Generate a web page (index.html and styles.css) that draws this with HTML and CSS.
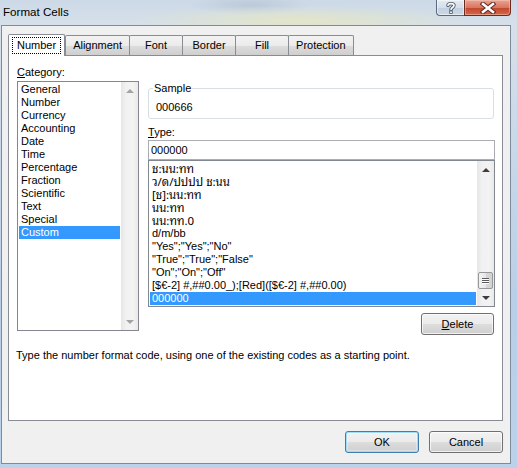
FILE: index.html
```html
<!DOCTYPE html>
<html lang="en">
<head>
    <meta charset="UTF-8">
    <meta name="viewport" content="width=device-width, initial-scale=1.0">
    <title>Format Cells</title>
    <link rel="stylesheet" href="styles.css">
</head>
<body>
    <div class="window">
        <div class="titlebar">
            <span class="title">Format Cells</span>
            <div class="caption-buttons">
                <span class="cap-btn help-btn">
                    <svg width="12" height="13" viewBox="0 0 12 13">
                        <path d="M3 4.5 C3 2 9 2 9 4.5 C9 6.5 6 6.5 6 8.5" fill="none" stroke="#4a5868" stroke-width="3.4" stroke-linecap="round"/>
                        <path d="M3 4.5 C3 2 9 2 9 4.5 C9 6.5 6 6.5 6 8.5" fill="none" stroke="#fff" stroke-width="1.6" stroke-linecap="round"/>
                        <rect x="4.3" y="9.6" width="3.4" height="3.2" fill="#4a5868"/>
                        <rect x="5.1" y="10.4" width="1.8" height="1.6" fill="#fff"/>
                    </svg>
                </span>
                <span class="cap-btn close-btn">
                    <svg width="16" height="12" viewBox="0 0 16 12">
                        <path d="M3 2 L13 10 M13 2 L3 10" stroke="#5b2a22" stroke-width="4.6" stroke-linecap="square"/>
                        <path d="M3 2 L13 10 M13 2 L3 10" stroke="#fff" stroke-width="2.6" stroke-linecap="square"/>
                    </svg>
                </span>
            </div>
        </div>

        <div class="client">
            <div class="tabs">
                <div class="tab active"><span class="focus">Number</span></div>
                <div class="tab">Alignment</div>
                <div class="tab">Font</div>
                <div class="tab">Border</div>
                <div class="tab">Fill</div>
                <div class="tab">Protection</div>
            </div>

            <div class="panel">
                <div class="panel-grid">
                    <div class="col-left">
                        <div class="label"><u>C</u>ategory:</div>
                        <div class="listbox category-list">
                            <ul class="items">
                                <li>General</li>
                                <li>Number</li>
                                <li>Currency</li>
                                <li>Accounting</li>
                                <li>Date</li>
                                <li>Time</li>
                                <li>Percentage</li>
                                <li>Fraction</li>
                                <li>Scientific</li>
                                <li>Text</li>
                                <li>Special</li>
                                <li class="selected">Custom</li>
                            </ul>
                            <div class="scrollbar disabled">
                                <div class="sb-btn"><span class="arrow up"></span></div>
                                <div class="sb-track"></div>
                                <div class="sb-btn"><span class="arrow down"></span></div>
                            </div>
                        </div>
                    </div>

                    <div class="col-right">
                        <div class="groupbox">
                            <span class="legend">Sample</span>
                            <div class="sample-value">000666</div>
                        </div>
                        <div class="label type-label"><u>T</u>ype:</div>
                        <div class="textbox">000000</div>
                        <div class="listbox type-list">
                            <ul class="items">
                                <li class="thai">ช:นน:ทท</li>
                                <li class="thai">ว/ด/ปปปป ช:นน</li>
                                <li class="thai">[ช]:นน:ทท</li>
                                <li class="thai">นน:ทท</li>
                                <li class="thai">นน:ทท.0</li>
                                <li>d/m/bb</li>
                                <li>"Yes";"Yes";"No"</li>
                                <li>"True";"True";"False"</li>
                                <li>"On";"On";"Off"</li>
                                <li>[$€-2] #,##0.00_);[Red]([$€-2] #,##0.00)</li>
                                <li class="selected">000000</li>
                            </ul>
                            <div class="scrollbar">
                                <div class="sb-btn"><span class="arrow up"></span></div>
                                <div class="sb-track">
                                    <div class="sb-thumb"><span></span><span></span><span></span></div>
                                </div>
                                <div class="sb-btn"><span class="arrow down"></span></div>
                            </div>
                        </div>
                        <div class="delete-row">
                            <button class="btn"><u>D</u>elete</button>
                        </div>
                    </div>
                </div>
                <p class="hint">Type the number format code, using one of the existing codes as a starting point.</p>
            </div>

            <div class="footer">
                <button class="btn default">OK</button>
                <button class="btn">Cancel</button>
            </div>
        </div>
    </div>
</body>
</html>
```

FILE: styles.css
```css
body {
    margin: 0;
    width: 517px;
    height: 468px;
    overflow: hidden;
    font-family: "Liberation Sans", Arial, "DejaVu Sans", sans-serif;
    font-size: 11px;
    color: #000;
    /* aero glass frame */
    background:
        radial-gradient(ellipse 170px 14px at 300px 20px, rgba(228, 230, 196, 0.9), rgba(228, 230, 196, 0)),
        radial-gradient(ellipse 60px 10px at 250px 5px, rgba(150, 170, 190, 0.35), rgba(150, 170, 190, 0)),
        linear-gradient(to bottom, #ccd9e6 0, #d6e0ea 25px, #b9cfe7 300px, #bcd2ea 468px);
}

.window {
    display: flex;
    flex-direction: column;
}

/* title bar */
.titlebar {
    height: 25px;
    display: flex;
    justify-content: space-between;
    align-items: flex-start;
}

.title {
    font-size: 11.6px;
    margin: 5px 0 0 3px;
    line-height: 14px;
    color: #000;
}

.caption-buttons {
    display: flex;
    margin-right: 6px;
}

.cap-btn {
    height: 16px;
    display: flex;
    align-items: center;
    justify-content: center;
    border: 1px solid #5a6a7c;
    border-top: none;
    box-sizing: border-box;
}

.help-btn {
    width: 28px;
    border-radius: 0 0 0 4px;
    border-right: none;
    background: linear-gradient(to bottom, #e4ebf2 0, #d5dfea 50%, #c0cfdf 51%, #cbd8e6 100%);
    box-shadow: inset 0 0 0 1px rgba(255, 255, 255, 0.5);
}

.close-btn {
    width: 47px;
    border-radius: 0 0 4px 0;
    border-color: #6b2a20;
    background: linear-gradient(to bottom, #e8a493 0, #d9765f 50%, #c4432a 51%, #d06a4c 100%);
    box-shadow: inset 0 0 0 1px rgba(255, 210, 200, 0.45);
}

/* dialog body */
.client {
    margin-left: 1px;
    width: 510px;
    height: 439px;
    box-sizing: border-box;
    border: 1px solid #7d8c9c;
    background: #f0f0f0;
    padding: 8px 7px 0 6px;
    display: flex;
    flex-direction: column;
}

.tabs {
    display: flex;
    align-items: flex-end;
    height: 21px;
    position: relative;
    z-index: 1;
}

.tab {
    box-sizing: border-box;
    height: 20px;
    min-width: 54px;
    padding: 0 7px;
    border: 1px solid #898c95;
    border-bottom: none;
    border-radius: 2px 2px 0 0;
    background: linear-gradient(to bottom, #f3f3f3 0, #ebebeb 50%, #dddddd 51%, #cfcfcf 100%);
    display: flex;
    align-items: center;
    justify-content: center;
    line-height: 13px;
    margin-right: -1px;
}

.tab.active {
    height: 22px;
    margin-bottom: -1px;
    padding: 0 3px;
    background: #fff;
    margin-right: 0;
    padding-bottom: 1px;
}

.focus {
    border: 1px dotted #000;
    padding: 1px 4px;
}

.panel {
    height: 366px;
    box-sizing: border-box;
    border: 1px solid #898c95;
    background: #fff;
    padding: 0 7px 0 8px;
}

.panel-grid {
    display: grid;
    grid-template-columns: 122px 347px;
    column-gap: 9px;
    align-items: start;
}

.label {
    line-height: 13px;
    margin-top: 10px;
}

.listbox {
    border: 1px solid #828790;
    display: flex;
    box-sizing: border-box;
    background: #fff;
}

.category-list {
    height: 250px;
    margin-top: 2px;
}

.items {
    list-style: none;
    margin: 0;
    padding: 1px 1px 0 1px;
    flex: 1;
    overflow: hidden;
}

.items li {
    height: 13px;
    line-height: 13px;
    padding-left: 2px;
    white-space: nowrap;
}

.items li.selected {
    background: #3399ff;
    color: #fff;
}

/* looped thai face, like the system one */
.thai {
    font-family: "Noto Sans Thai Looped", Loma, Garuda, Norasi, "Noto Serif Thai", "Noto Sans Thai", "Liberation Sans", sans-serif;
    font-size: 11.5px;
}

/* vertical scrollbar */
.scrollbar {
    width: 17px;
    display: flex;
    flex-direction: column;
    background: linear-gradient(to right, #e6e6e6 0, #f1f1f1 30%, #f3f3f3 70%, #e9e9e9 100%);
}

.sb-btn {
    height: 17px;
    display: flex;
    align-items: center;
    justify-content: center;
}

.sb-track {
    flex: 1;
    display: flex;
    flex-direction: column;
    justify-content: flex-end;
}

.arrow {
    width: 0;
    height: 0;
    border-left: 4px solid transparent;
    border-right: 4px solid transparent;
}

.arrow.up {
    border-bottom: 4px solid #3d3d3d;
}

.arrow.down {
    border-top: 4px solid #3d3d3d;
}

.scrollbar.disabled .arrow.up {
    border-bottom-color: #a3a3a3;
}

.scrollbar.disabled .arrow.down {
    border-top-color: #a3a3a3;
}

.sb-thumb {
    height: 17px;
    margin: 0 1px;
    box-sizing: border-box;
    border: 1px solid #979797;
    border-radius: 2px;
    background: linear-gradient(to right, #f2f2f2 0, #e7e7e7 50%, #d6d6d6 51%, #d3d3d3 100%);
    display: flex;
    flex-direction: column;
    align-items: center;
    justify-content: center;
    gap: 1px;
}

.sb-thumb span {
    width: 7px;
    height: 1px;
    background: #5a5a5a;
    box-shadow: 0 1px 0 #fff;
}

/* right column */
.groupbox {
    position: relative;
    margin-top: 32px;
    width: 346px;
    height: 31px;
    box-sizing: border-box;
    border: 1px solid #d5dfe5;
    border-radius: 3px;
    padding: 12px 0 0 7px;
}

.legend {
    position: absolute;
    top: -7px;
    left: 4px;
    padding: 0 1px;
    line-height: 13px;
    background: #fff;
}

.sample-value {
    line-height: 13px;
}

.type-label {
    margin-top: 7px;
}

.textbox {
    margin-top: 1px;
    height: 20px;
    box-sizing: border-box;
    border: 1px solid #abadb3;
    padding: 3px 0 0 2px;
    line-height: 13px;
}

.type-list {
    height: 147px;
}

.delete-row {
    display: flex;
    justify-content: flex-end;
    margin: 6px 1px 0 0;
}

/* push buttons */
.btn {
    width: 73px;
    height: 22px;
    padding: 0;
    font-family: inherit;
    font-size: 11px;
    color: #000;
    border: 1px solid #707070;
    border-radius: 3px;
    background: linear-gradient(to bottom, #f2f2f2 0, #ebebeb 50%, #dddddd 51%, #cfcfcf 100%);
    box-shadow: inset 0 0 0 1px rgba(255, 255, 255, 0.7);
}

.btn.default {
    border-color: #3c7fb1;
    box-shadow: inset 0 0 0 1px #9fdcf7, inset 0 0 0 2px rgba(255, 255, 255, 0.3);
}

.hint {
    margin: 14px 0 0 -1px;
    line-height: 13px;
}

.footer {
    display: flex;
    justify-content: flex-end;
    gap: 10px;
    margin-top: 10px;
}

.footer .btn {
    width: 74px;
}
```
